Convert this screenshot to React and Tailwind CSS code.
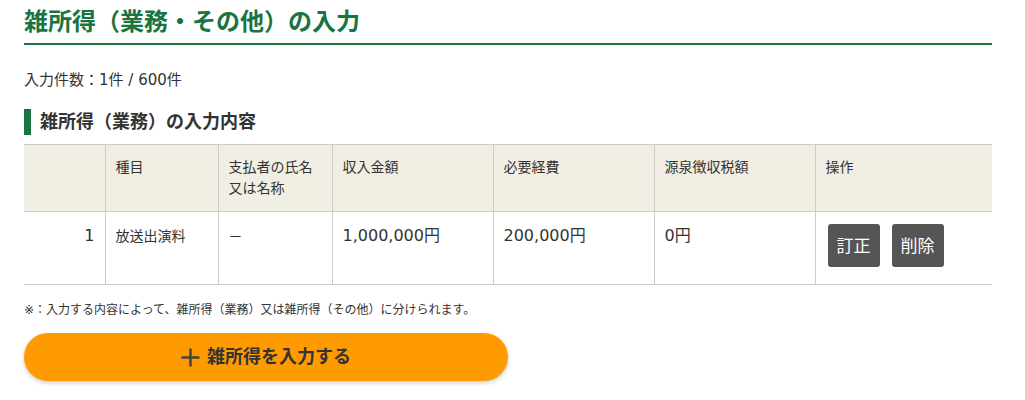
export default function App() {
  const font = { fontFamily: '"DejaVu Sans", "Noto Sans CJK JP", sans-serif' };
  const th = "border-l border-[#cccccc] align-top px-[10px] pt-[12px] text-[14px] leading-[21px] font-normal text-left";
  const td = "border-l border-[#cccccc] align-top px-[10px] pt-[12px]";
  return (
    <div className="bg-white w-[1025px] h-[400px] text-[#333333] pl-[24px] pr-[33px] pt-[4px]" style={font}>
      <h1 className="text-[24px] leading-[36px] font-bold text-[#1a7441] border-b-2 border-[#1a7441] pb-[3px]">
        雑所得（業務・その他）の入力
      </h1>
      <p className="mt-[23px] text-[15px] leading-[24px]">入力件数：1件 / 600件</p>
      <div className="mt-[17px] flex items-center h-[26px]">
        <div className="w-[7px] h-[26px] bg-[#1a7441]" />
        <h2 className="ml-[9px] text-[18px] leading-[26px] font-bold">雑所得（業務）の入力内容</h2>
      </div>
      <table className="mt-[9px] w-[968px] border-collapse table-fixed">
        <colgroup>
          <col className="w-[81px]" />
          <col className="w-[113px]" />
          <col className="w-[114px]" />
          <col className="w-[161px]" />
          <col className="w-[161px]" />
          <col className="w-[161px]" />
          <col className="w-[177px]" />
        </colgroup>
        <thead>
          <tr className="bg-[#f1eee3] h-[67px] border-t border-b border-[#cccccc]">
            <th className="align-top px-[10px] pt-[12px] font-normal"></th>
            <th className={th}>種目</th>
            <th className={th}>支払者の氏名<br />又は名称</th>
            <th className={th}>収入金額</th>
            <th className={th}>必要経費</th>
            <th className={th}>源泉徴収税額</th>
            <th className={th}>操作</th>
          </tr>
        </thead>
        <tbody>
          <tr className="h-[73px] border-b border-[#cccccc]">
            <td className="align-top pt-[12px] pr-[10px] text-right text-[16px] leading-[24px]">1</td>
            <td className={td + " text-[14px] leading-[24px]"}>放送出演料</td>
            <td className={td + " text-[14px] leading-[24px]"}>－</td>
            <td className={td + " text-[16px] leading-[24px]"}>1,000,000円</td>
            <td className={td + " text-[16px] leading-[24px]"}>200,000円</td>
            <td className={td + " text-[16px] leading-[24px]"}>0円</td>
            <td className="border-l border-[#cccccc] align-top pl-[12px] pt-[12px]">
              <div className="flex gap-[12px]">
                <button className="w-[52px] h-[43px] rounded-[3px] bg-[#555555] text-white text-[17px] leading-[24px]">訂正</button>
                <button className="w-[52px] h-[43px] rounded-[3px] bg-[#555555] text-white text-[17px] leading-[24px]">削除</button>
              </div>
            </td>
          </tr>
        </tbody>
      </table>
      <p className="mt-[16px] text-[12px] leading-[18px]">※：入力する内容によって、雑所得（業務）又は雑所得（その他）に分けられます。</p>
      <button className="mt-[14px] w-[484px] h-[48px] rounded-full bg-[#ff9a00] flex items-center justify-center gap-[7px] shadow-[0_2px_4px_rgba(0,0,0,0.2)]">
        <svg width="19" height="19" viewBox="0 0 19 19" className="text-[#444444]">
          <path d="M9.5 0.5v18M0.5 9.5h18" stroke="currentColor" strokeWidth="2.5" fill="none" />
        </svg>
        <span className="text-[18px] leading-[26px] font-bold text-[#333333]">雑所得を入力する</span>
      </button>
    </div>
  );
}
